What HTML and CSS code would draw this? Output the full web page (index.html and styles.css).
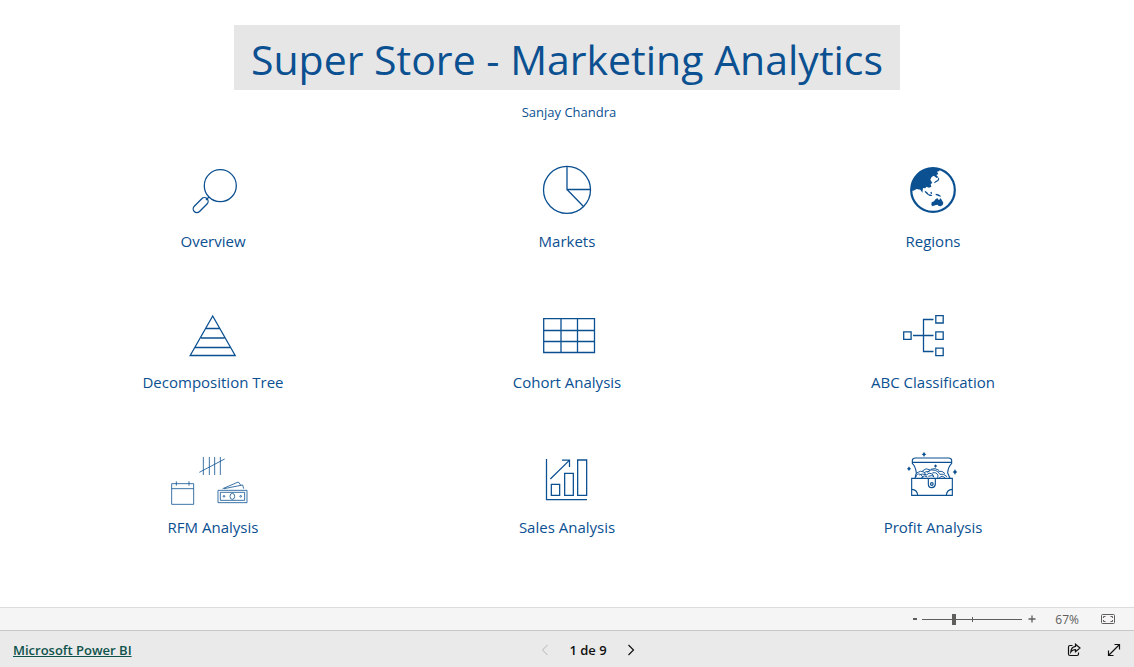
FILE: index.html
```html
<!DOCTYPE html>
<html lang="en">
<head>
<meta charset="utf-8">
<title>Super Store - Marketing Analytics</title>
<link rel="stylesheet" href="styles.css">
</head>
<body>
<main class="report">
  <h1 class="title">Super Store - Marketing Analytics</h1>
  <p class="author">Sanjay Chandra</p>
  <nav class="tiles">
    <a class="tile" href="#overview">
      <svg class="icon" viewBox="0 0 96 60" aria-hidden="true">
        <circle cx="55.3" cy="23.7" r="16"/>
        <path d="M44 35l-3 3"/>
        <rect x="27" y="39.8" width="18" height="7.4" rx="3.7" transform="rotate(-45 35.3 43.7)"/>
      </svg>
      <span class="label">Overview</span>
    </a>
    <a class="tile" href="#markets">
      <svg class="icon" viewBox="0 0 96 60" aria-hidden="true">
        <circle cx="48" cy="27.8" r="23.5"/>
        <path d="M48 4.3V27.5H71.5M48 27.5L64.5 44.5"/>
      </svg>
      <span class="label">Markets</span>
    </a>
    <a class="tile" href="#regions">
      <svg class="icon" viewBox="0 0 96 60" aria-hidden="true">
        <circle cx="48" cy="28" r="21.8" stroke-width="2.2"/>
        <g class="solid" transform="translate(5 -7) scale(.33333)">
          <path d="M62 107A67 67 0 0 1 129 38L143 40L149 48L141 50L145 57L139 60L145 67L140 69L131 62L125 66L121 74L127 84L122 87L124 95L117 98L109 95L106 100L99 99L97 113L91 104L80 102L70 107Z"/>
          <path d="M145 67l3 5-3 6-7 4-4 3-2-2 5-5 6-3z"/>
          <path d="M104 107l7 4 5 7 8 1 3 4-8 0-8-5-6-6zM121 112l4-2 1 6-3 2zM137 116l8 2 8 5-2 2-6-2-8-3z"/>
          <path d="M125 142l7-3 5-7 6-2 2 4 4 0 1-5 4 4 6 10-2 7-6 4-6-1-3-4-8 2-7 3-4-4z"/>
        </g>
      </svg>
      <span class="label">Regions</span>
    </a>
    <a class="tile" href="#decomposition">
      <svg class="icon" viewBox="0 0 96 60" aria-hidden="true">
        <path d="M47.7 13L25.2 52.5H70.2ZM41 25.5H54.5M36 35H59.5M30 44.5H65.5"/>
      </svg>
      <span class="label">Decomposition Tree</span>
    </a>
    <a class="tile" href="#cohort">
      <svg class="icon" viewBox="0 0 96 60" aria-hidden="true">
        <path d="M24.7 15.7H75.5V49.5H24.7ZM42 15.7V49.5M58.5 15.7V49.5M24.7 27.5H75.5M24.7 38.5H75.5"/>
      </svg>
      <span class="label">Cohort Analysis</span>
    </a>
    <a class="tile" href="#abc">
      <svg class="icon" viewBox="0 0 96 60" aria-hidden="true">
        <path d="M18.7 28.9h7.4v7.4h-7.4zM50.8 12.6h7.4V20h-7.4zM50.8 28.9h7.4v7.4h-7.4zM50.8 45.2h7.4v7.4h-7.4zM48.5 16.5h-10v32h10M28 32.5h20.5"/>
      </svg>
      <span class="label">ABC Classification</span>
    </a>
    <a class="tile" href="#rfm">
      <svg class="icon" viewBox="0 0 96 60" aria-hidden="true">
        <g transform="translate(-15 -3) scale(.33333)" stroke-width="2.4">
          <path d="M160 36V90M178 36V90M194 36V90M211 36V90M148 82L224 42"/>
          <path d="M65 116H131V178H65ZM65 131H131M79 109V122M117 109V122"/>
          <path d="M204 136H291V173H204ZM218 131L265 111L272 120M222 131L278 120L281 131M211 142H284V166H211Z"/>
          <ellipse cx="247" cy="154" rx="7" ry="9"/>
          <circle cx="222" cy="154" r="2.5"/><circle cx="272" cy="154" r="2.5"/>
        </g>
      </svg>
      <span class="label">RFM Analysis</span>
    </a>
    <a class="tile" href="#sales">
      <svg class="icon" viewBox="0 0 96 60" aria-hidden="true">
        <g transform="translate(-19 -3) scale(.33333)" stroke-width="3.8">
          <path d="M139.500 42V164H261M154 118H179V151H154ZM194 85H220V151H194ZM233 45H260V151H233ZM151 102L208 46M186 45.500H208.500V66"/>
        </g>
      </svg>
      <span class="label">Sales Analysis</span>
    </a>
    <a class="tile" href="#profit">
      <svg class="icon" viewBox="0 0 96 60" aria-hidden="true">
        <g transform="translate(5 -3) scale(.33333)" stroke-width="3.4">
          <path d="M65 100H187V151H65ZM75 100L79 84Q77 65 67 55V46Q68 39 76 39H176Q184 39 185 46V55Q174 66 173 84L180 100M67 52H185"/>
          <path d="M65 133Q82 134 83 151M187 133Q170 134 169 151M115 100V118Q116 128 125 128Q135 127 136 118V100"/>
          <circle cx="125.500" cy="117" r="4"/>
          <path stroke-width="2.800" d="M78 96Q79 84 91 88Q98 92 99 99M80 84Q92 75 102 81L108 90Q95 84 89 91M97 78Q108 67 119 74L116 80Q106 78 103 84M112 82Q122 70 136 76Q143 78 149 87M122 73Q135 67 147 76M108 91Q117 80 127 87L132 97M127 84Q139 80 144 91L143 99M145 79Q158 76 165 86M149 88Q160 84 171 95M94 98Q102 88 112 96M148 98Q156 89 165 98M115 94Q124 90 132 94"/>
          <g class="solid"><path d="M102 20q2 6 7 8q-5 2-7 8q-2-6-7-8q5-2 7-8zM57 64q2 6 6 7q-4 2-6 7q-2-5-6-7q4-1 6-7zM195 72q2 7 7 9q-5 2-7 9q-2-7-7-9q5-2 7-9zM137 58q1 4 5 5q-4 2-5 6q-2-4-6-6q4-1 6-5z"/></g>
        </g>
      </svg>
      <span class="label">Profit Analysis</span>
    </a>
  </nav>
</main>
<div class="zoombar">
  <button class="zoom-btn" aria-label="Zoom out"><svg width="6" height="12" viewBox="0 0 6 12"><path d="M1 6H5" stroke-width="2"/></svg></button>
  <input class="slider" type="range" min="10" max="200" value="68" aria-label="Zoom">
  <button class="zoom-btn" aria-label="Zoom in"><svg width="8" height="12" viewBox="0 0 8 12"><path d="M.5 6H7.500M4 2.500V9.500" stroke-width="1.300"/></svg></button>
  <span class="percent">67%</span>
  <button class="zoom-btn" aria-label="Fit to page"><svg width="16" height="12" viewBox="0 0 16 12"><rect x="1.500" y="1.500" width="13" height="9" rx="1"/><path d="M5.500 3.500H3.500V5M10.500 3.500H12.500V5M5.500 8.500H3.500V7M10.500 8.500H12.500V7"/></svg></button>
</div>
<footer class="footer">
  <a class="brand" href="#powerbi">Microsoft Power BI</a>
  <div class="pager">
    <button class="foot-btn" aria-label="Previous page" disabled><svg width="8" height="12" viewBox="0 0 8 12"><path d="M6.500 1L1.500 6L6.500 11"/></svg></button>
    <span class="page">1 de 9</span>
    <button class="foot-btn" aria-label="Next page"><svg width="8" height="12" viewBox="0 0 8 12"><path d="M1.500 1L6.500 6L1.500 11" stroke-width="1.200"/></svg></button>
  </div>
  <div class="actions">
    <button class="foot-btn" aria-label="Share"><svg width="14" height="14" viewBox="0 0 14 14"><path stroke-width="1.200" d="M5.500 2.500H3Q1.500 2.500 1.500 4V11Q1.500 12.500 3 12.500H10Q11.500 12.500 11.500 11V9.500M8.500 1.200L13 5L8.500 8.800V6.700Q5.500 6.500 3.800 9Q4.200 4 8.500 3.400Z"/></svg></button>
    <button class="foot-btn" aria-label="Full screen"><svg width="14" height="14" viewBox="0 0 14 14"><path stroke-width="1.200" d="M1.500 12.500L12.500 1.500M7.500 1.500H12.500V6.500M1.500 7.500V12.500H6.500"/></svg></button>
  </div>
</footer>
</body>
</html>
```
FILE: styles.css
```css
* { box-sizing: border-box; }

body {
  margin: 0;
  min-height: 100vh;
  display: flex;
  flex-direction: column;
  background: #fff;
  color: #0b5091;
  font-family: "Segoe UI", "Open Sans", "Noto Sans", sans-serif;
}

.report {
  flex: 1;
  display: flex;
  flex-direction: column;
  padding-top: 25px;
}

.title {
  align-self: center;
  margin: 0;
  padding: 4px 17px 0;
  background: #e6e6e6;
  font-size: 41px;
  font-weight: 400;
  line-height: 61px;
}

.author {
  margin: 12px 0 0;
  padding-left: 4px;
  text-align: center;
  font-size: 13px;
  line-height: 20px;
}

.tiles {
  display: grid;
  grid-template-columns: 354fr 354fr 378fr;
  grid-template-rows: 141px 145px auto;
  padding: 40px 12px 0 36px;
}

.tile {
  display: flex;
  flex-direction: column;
  align-items: center;
  align-self: start;
  gap: 7px;
  color: inherit;
  text-decoration: none;
}

.icon {
  width: 96px;
  height: 60px;
  fill: none;
  stroke: #0b5091;
  stroke-width: 1.3;
}

.solid {
  fill: #0b5091;
  stroke: none;
}

.label {
  font-size: 15px;
  line-height: 24px;
}

button {
  display: flex;
  padding: 0;
  border: 0;
  background: none;
  color: inherit;
}

button svg {
  fill: none;
  stroke: currentColor;
}

.zoombar {
  display: flex;
  align-items: center;
  justify-content: flex-end;
  height: 24px;
  padding-right: 18px;
  border-top: 1px solid #dcdcdc;
  border-bottom: 1px solid #c8c8c8;
  background: #f5f5f5;
  color: #605e5c;
  font-size: 12px;
}

.slider {
  appearance: none;
  width: 100px;
  height: 12px;
  margin: 0 6px 0 4px;
  background:
    linear-gradient(#605e5c, #605e5c) 50px 50% / 1px 5px no-repeat,
    linear-gradient(#605e5c, #605e5c) 0 50% / 100% 1px no-repeat;
}

.slider::-webkit-slider-thumb {
  appearance: none;
  width: 4px;
  height: 11px;
  background: #605e5c;
}

.percent {
  margin: 0 21px 0 19px;
}

.footer {
  display: grid;
  grid-template-columns: 1fr auto 1fr;
  align-items: center;
  height: 36px;
  padding: 2px 13px 0;
  background: #eaeaea;
  color: #111;
  font-size: 13px;
  font-weight: 600;
}

.brand {
  color: #0e534c;
}

.pager {
  display: flex;
  align-items: center;
  gap: 20px;
  padding-left: 42px;
}

.foot-btn:disabled {
  color: #b5b5b5;
}

.actions {
  display: flex;
  justify-content: flex-end;
  gap: 26px;
}
```
